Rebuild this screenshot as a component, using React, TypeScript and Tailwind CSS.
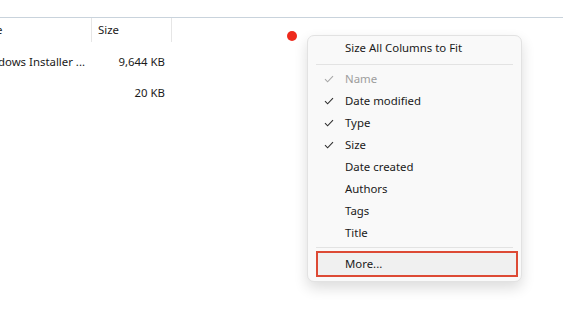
import React from "react";

const Check = ({ light }: { light?: boolean }) => (
  <svg width="10" height="8" viewBox="0 0 10 8" className="block">
    <path d="M1 4.2 L3.6 6.8 L9 1.2" fill="none" stroke={light ? "#a8a8a8" : "#303030"} strokeWidth="1.1" />
  </svg>
);

const items: { label: string; checked?: boolean; disabled?: boolean }[] = [
  { label: "Name", checked: true, disabled: true },
  { label: "Date modified", checked: true },
  { label: "Type", checked: true },
  { label: "Size", checked: true },
  { label: "Date created" },
  { label: "Authors" },
  { label: "Tags" },
  { label: "Title" },
];

export default function App() {
  return (
    <div
      className="relative w-[563px] h-[324px] bg-white overflow-hidden text-[11.4px] text-[#1a1a1a]"
      style={{ fontFamily: '"Noto Sans", "Open Sans", sans-serif' }}
    >
      <div className="h-[17px]" />
      <div className="border-t border-[#c9d3dc] flex h-[25px]">
        <div className="w-[92px] border-r border-[#e6e6e6] flex items-center overflow-hidden">
          <span className="-ml-[4px]">e</span>
        </div>
        <div className="w-[80px] border-r border-[#e6e6e6] flex items-center pl-[6px]">Size</div>
      </div>
      <div className="flex h-[40px] items-center">
        <div className="w-[92px] whitespace-nowrap overflow-hidden">
          <span className="-ml-[2px] block">dows Installer ...</span>
        </div>
        <div className="w-[80px] text-right pr-[7px]">9,644 KB</div>
      </div>
      <div className="flex h-[22px] items-center">
        <div className="w-[92px]" />
        <div className="w-[80px] text-right pr-[7px]">20 KB</div>
      </div>

      <div className="absolute left-[287px] top-[31px] w-[10px] h-[10px] rounded-full bg-[#ee2a1c]" />

      <div className="absolute left-[307px] top-[35px] w-[215px] bg-[#f9f9f9] border border-[#e2e2e2] rounded-[7px] shadow-[0_6px_14px_rgba(0,0,0,0.14)] pt-px pb-[4px] px-[4px]">
        <div className="h-[22px] flex items-center pl-[33px]">Size All Columns to Fit</div>
        <div className="h-[9px] flex items-center px-[4px]">
          <div className="h-px w-full bg-[#e3e3e3] mt-[1px]" />
        </div>
        {items.map((it) => (
          <div key={it.label} className="h-[22px] flex items-center">
            <div className="w-[33px] flex justify-center pl-[1px]">{it.checked && <Check light={it.disabled} />}</div>
            <span className={it.disabled ? "text-[#9d9d9d]" : ""}>{it.label}</span>
          </div>
        ))}
        <div className="h-[7px] flex items-center px-[4px]">
          <div className="h-px w-full bg-[#e3e3e3]" />
        </div>
        <div className="h-[26px] ml-[4px] -mr-[1px] border-2 border-[#dd4a35] bg-[#f0f0f0] flex items-center pl-[27px]">More...</div>
      </div>
    </div>
  );
}
